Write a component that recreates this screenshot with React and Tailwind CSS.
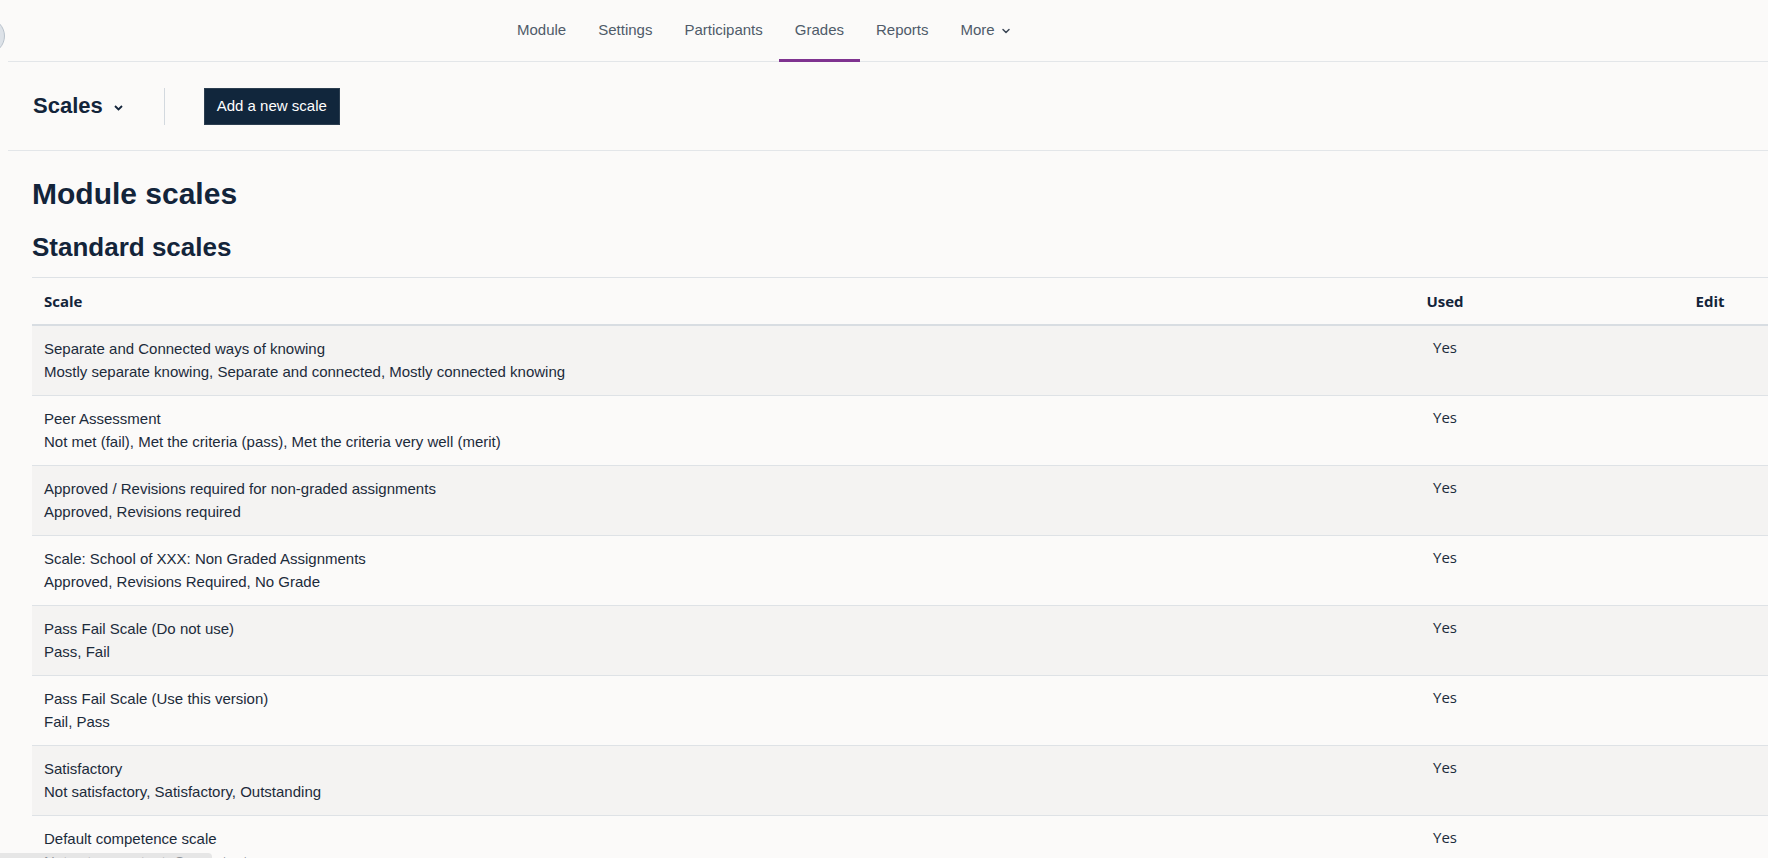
import { ChevronDown } from "lucide-react";

const tabs = [
  "Module",
  "Settings",
  "Participants",
  "Grades",
  "Reports",
];

const scales = [
  [
    "Separate and Connected ways of knowing",
    "Mostly separate knowing, Separate and connected, Mostly connected knowing",
  ],
  [
    "Peer Assessment",
    "Not met (fail), Met the criteria (pass), Met the criteria very well (merit)",
  ],
  [
    "Approved / Revisions required for non-graded assignments",
    "Approved, Revisions required",
  ],
  [
    "Scale: School of XXX: Non Graded Assignments",
    "Approved, Revisions Required, No Grade",
  ],
  ["Pass Fail Scale (Do not use)", "Pass, Fail"],
  ["Pass Fail Scale (Use this version)", "Fail, Pass"],
  [
    "Satisfactory",
    "Not satisfactory, Satisfactory, Outstanding",
  ],
  [
    "Default competence scale",
    "Not yet competent, Competent",
  ],
];

function App() {
  return (
    <div className="relative h-[858px] w-full overflow-hidden bg-[#fbfaf9] font-['Liberation_Sans',Arial,sans-serif] text-[#1c2b3b]">
      {/* DRAWER TOGGLE (mostly off screen) */}
      <div className="absolute -left-[31px] top-[18px] h-[36px] w-[36px] rounded-full border border-[#b9c2cc] bg-[#dde2e8]" />

      <div className="ml-2">
        {/* SECONDARY NAV */}
        <nav className="flex h-[62px] border-b border-[#e3e6e9] pl-[493px]">
          {tabs.map((tab) => (
            <a
              key={tab}
              className={`flex h-[62px] items-center px-4 pt-[2px] text-[15px] text-[#4f5b69] ${
                tab === "Grades"
                  ? "border-b-[3px] border-[#7f3390]"
                  : "pb-[3px]"
              }`}
            >
              {tab}
            </a>
          ))}
          <a className="flex h-[62px] items-center gap-[5px] px-4 pb-[3px] pt-[2px] text-[15px] text-[#4f5b69]">
            More
            <ChevronDown
              className="h-[12px] w-[12px] text-[#3c4756]"
              strokeWidth={3}
            />
          </a>
        </nav>

        {/* PAGE HEADER */}
        <div className="flex h-[89px] items-center border-b border-[#e3e6e9] pl-[25px]">
          <h2 className="text-[22px] font-bold leading-none text-[#13243a]">
            Scales
          </h2>
          <svg
            className="ml-[11px] mt-[4px]"
            width="9"
            height="6"
            viewBox="0 0 9 6"
          >
            <path
              d="M1 1l3.5 3.5L8 1"
              fill="none"
              stroke="#13243a"
              strokeWidth="1.8"
            />
          </svg>
          <div className="ml-[41px] h-[37px] w-px bg-[#d3d9df]" />
          <button className="ml-[39px] flex h-[37px] items-center border border-[#2c3e50] bg-[#11263c] px-[12px] text-[15px] text-white">
            Add a new scale
          </button>
        </div>

        {/* CONTENT */}
        <main className="pl-[24px]">
          <h1 className="mt-[25px] text-[30px] font-bold leading-[36px] text-[#13243a]">
            Module scales
          </h1>
          <h2 className="mt-[20px] text-[26px] font-bold leading-[31px] text-[#13243a]">
            Standard scales
          </h2>

          {/* TABLE */}
          <div className="mt-[14px] w-[1878px] border-t border-[#dee2e6]">
            <div className="grid h-[48px] grid-cols-[1348px_130px_400px] items-center border-b-2 border-[#d8dde2] font-['Open_Sans',sans-serif] text-[15px] font-bold leading-[22px] text-[#13243a]">
              <div className="pl-3">Scale</div>
              <div className="text-center">Used</div>
              <div className="text-center">Edit</div>
            </div>

            {scales.map(([name, items], i) => (
              <div
                key={name}
                className={`grid h-[70px] grid-cols-[1348px_130px_400px] border-b border-[#dee2e6] ${
                  i % 2 === 0
                    ? "bg-[#f4f3f2]"
                    : ""
                }`}
              >
                <div className="pl-3 pt-[11px] text-[15px] leading-[23px] text-[#1c2b3b]">
                  <div>{name}</div>
                  <div>{items}</div>
                </div>
                <div className="pt-[10px] text-center font-['Open_Sans',sans-serif] text-[15px] leading-[23px] text-[#1c2b3b]">
                  Yes
                </div>
                <div />
              </div>
            ))}
          </div>
        </main>
      </div>

      {/* STATUS BAR */}
      <div className="absolute bottom-0 left-0 h-[5px] w-[212px] rounded-tr-[4px] bg-[#d9d9d9]/60" />
    </div>
  );
}

export default App;
